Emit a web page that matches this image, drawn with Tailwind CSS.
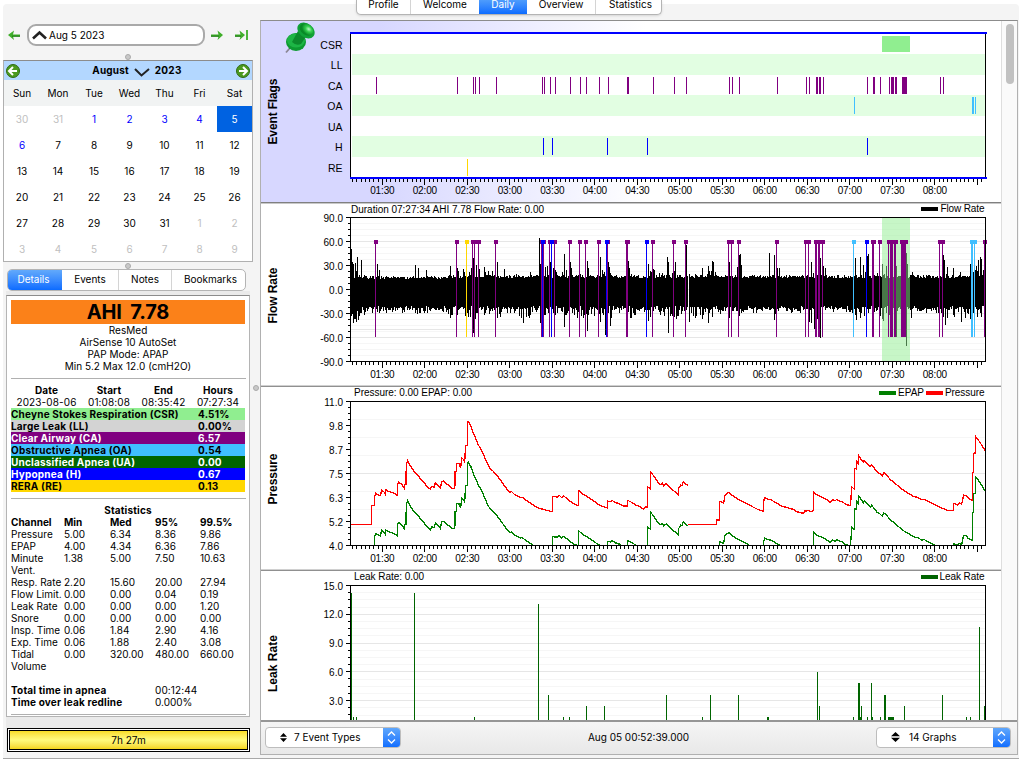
<!DOCTYPE html>
<html lang="en">
  <head>
    <meta charset="UTF-8" />
    <meta name="viewport" content="width=device-width, initial-scale=1.0" />
    <title>Daily</title>
    <!-- Tailwind CSS -->
    <script src="https://cdn.jsdelivr.net/npm/@tailwindcss/browser@4"></script>
  </head>
  <body class="bg-white font-['Inter',sans-serif] text-[10px] leading-3 text-black">
    <div class="relative flex h-[759px] w-[1019px] overflow-hidden pt-1 pl-[3px]">
      <div class="flex w-full rounded-tl rounded-tr border-b border-[#a8a8a8] bg-[#f4f4f4]">
        <!-- Left column -->
        <aside class="w-[250px] shrink-0">
          <!-- Date picker -->
          <div class="flex h-[56px] items-center pt-[6px] pl-[5px]">
            <svg class="h-3 w-3" viewBox="0 0 12 12">
              <path d="M6 1.500 0 6l6 5-1-3.500h7v-2H5z" fill="#3fae2a" />
              <path d="M4 7.200h8" stroke="#17750f" />
            </svg>
            <div class="ml-[7px] flex h-[22px] w-[178px] items-center rounded-[9px] border-2 border-[#a9a9a9] bg-white pl-[3px]">
              <svg class="h-[10px] w-[15px]" viewBox="0 0 15 10">
                <path d="M1 8.500 7.500 2.500l6.500 6" fill="none" stroke="#222" stroke-width="2.600" />
              </svg>
              <span class="ml-[2px]">Aug 5 2023</span>
            </div>
            <svg class="ml-[6px] h-3 w-3" viewBox="0 0 12 12">
              <path d="M6.500 1.500 12 6l-5.500 5 1-3.500H0v-2h7.500z" fill="#3fae2a" />
              <path d="M0 7.200h8" stroke="#17750f" />
            </svg>
            <svg class="ml-3 h-3 w-[13px]" viewBox="0 0 13 12">
              <path d="M4.500 1.500 10 6l-5.500 5 1-3.500H0v-2h5.500z" fill="#3fae2a" />
              <path d="M0 7.200h6" stroke="#17750f" />
              <path d="M11 1h2v10h-2z" fill="#4db53a" />
            </svg>
          </div>

          <!-- Calendar -->
          <div class="h-[202px] w-[250px] border border-[#b0b0b0] border-t-[#8c8c8c] bg-white">
            <div class="flex h-[19px] items-center justify-between bg-[#b3d7ff] px-[2px]">
              <svg class="h-[14px] w-[14px]" viewBox="0 0 14 14">
                <circle cx="7" cy="7" r="6.500" fill="#4c9a1f" stroke="#2f6a12" />
                <path d="M7 3 3 7l4 4M3.500 7H11" fill="none" stroke="#fff" stroke-width="2" />
              </svg>
              <div class="flex items-center pr-[22px] pl-10 font-bold">
                <span class="-mt-px tracking-[0.15px]">August</span>
                <svg class="mx-[5px] mt-1 h-[9px] w-[16px]" viewBox="0 0 16 9">
                  <path d="M1 1l6.500 6.500L15 1" fill="none" stroke="#222" stroke-width="2" />
                </svg>
                <span class="-mt-px tracking-[0.3px]">2023</span>
              </div>
              <svg class="h-[14px] w-[14px]" viewBox="0 0 14 14">
                <circle cx="7" cy="7" r="6.500" fill="#4c9a1f" stroke="#2f6a12" />
                <path d="M7 3l4 4-4 4M10.500 7H3" fill="none" stroke="#fff" stroke-width="2" />
              </svg>
            </div>
            <div id="calendar" class="grid grid-cols-[36px_36px_36px_35px_35px_35px_35px] grid-rows-[26px_26px_26px_26px_26px_26px_25px] text-center leading-[27px]"></div>
          </div>

          <!-- Detail tabs -->
          <div class="relative mt-[7px] ml-1 flex h-[22px] w-[239px] overflow-hidden rounded-[5px] border border-[#b4b4b4] bg-white leading-[19px]">
            <div class="w-[54px] bg-linear-to-b from-[#62a9fb] to-[#0a6bff] pr-[3px] text-center text-white">Details</div>
            <div class="w-[57px] border-r border-[#d4d4d4] text-center">Events</div>
            <div class="w-[53px] border-r border-[#d4d4d4] text-center">Notes</div>
            <div class="grow pl-1 text-center">Bookmarks</div>
          </div>

          <div class="ml-[3px] h-[461px] w-[244px] bg-[#eaeaea] pt-1">
            <div class="h-[422px] border border-[#b4b4b4] border-t-[#8c8c8c] bg-white px-1 pt-1">
              <h1 class="h-6 w-[234px] bg-[#fb8119] text-center text-[20px] leading-6 font-bold tracking-[-0.2px] [word-spacing:4px]">AHI 7.78</h1>
              <div class="w-[234px] text-center tracking-[0.05px]">
                <p>ResMed</p>
                <p>AirSense 10 AutoSet</p>
                <p>PAP Mode: APAP</p>
                <p>Min 5.2 Max 12.0 (cmH2O)</p>
              </div>
              <hr class="mt-[6px] w-[235px] border-[#b0b0b0]" />
              <div class="mt-[5px] grid grid-cols-[71px_54px_55px_54px] text-center tracking-[0.12px]">
                <b>Date</b><b>Start</b><b>End</b><b>Hours</b>
                <span>2023-08-06</span><span>01:08:08</span><span>08:35:42</span><span>07:27:34</span>
              </div>
              <div id="events" class="w-[234px] font-bold tracking-[0.2px]"></div>
              <hr class="mt-[6px] w-[235px] border-[#b0b0b0]" />
              <p class="mt-[5px] w-[234px] text-center font-bold tracking-[0.15px]">Statistics</p>
              <div id="stats" class="grid grid-cols-[53px_46px_45px_45px_45px] [&>*]:whitespace-pre"></div>
              <div class="mt-3 grid grid-cols-[144px_90px] whitespace-nowrap">
                <b class="tracking-[0.18px]">Total time in apnea</b><span class="tracking-[0.1px]">00:12:44</span>
                <b class="tracking-[0.18px]">Time over leak redline</b><span>0.000%</span>
              </div>
              <hr class="mt-[6px] w-[235px] border-[#b0b0b0]" />
            </div>
            <div class="mt-[11px] ml-px h-6 w-[243px] border border-black bg-white p-px">
              <div class="h-5 border border-black bg-linear-to-b from-[#f8dc20] via-[#fffb7c] to-[#f3d513] text-center leading-[18px]">7h 27m</div>
            </div>
          </div>
        </aside>

        <!-- Right column -->
        <main class="ml-[7px] w-[759px]">
          <div class="flex h-4 pl-[96px]">
            <div class="-mt-1 flex h-[15px] w-[306px] overflow-hidden rounded-b-[5px] border border-t-0 border-[#b4b4b4] bg-white text-center leading-[9px] shadow-sm">
              <div class="w-[54px] border-r border-[#d4d4d4]">Profile</div>
              <div class="w-[68px]">Welcome</div>
              <div class="w-[48px] bg-linear-to-b from-[#4e9cfc] to-[#0a6bff] text-white">Daily</div>
              <div class="w-[69px] border-r border-[#d4d4d4]">Overview</div>
              <div class="grow pl-1">Statistics</div>
            </div>
          </div>
          <div class="h-[735px] w-[758px] border border-[#b0b0b0] border-t-[#8c8c8c]">
            <div class="flex h-[699px] bg-white">
              <div id="charts" class="w-[740px] font-['Liberation_Sans',sans-serif] [&>svg]:block"></div>
              <div class="w-4 border-l border-[#dedede] bg-[#fafafa] pt-[3px] pl-1">
                <div class="h-[60px] w-2 rounded-full bg-[#c1c1c1]"></div>
              </div>
            </div>
            <!-- Toolbar -->
            <div class="flex h-[34px] items-center justify-between border-t-2 border-[#969696] bg-linear-to-b from-[#f5f5f5] to-[#e8e8e8] pr-[6px] pb-[2px] pl-1">
              <div class="flex h-[21px] w-[136px] items-center overflow-hidden rounded-[4px] border border-[#bdbdbd] bg-white">
                <svg class="ml-[14px] h-[9px] w-[7px]" viewBox="0 0 7 9"><path d="M3.500 0 7 3.800H0zM3.500 9 7 5.200H0z" /></svg>
                <span class="ml-[7px] grow">7 Event Types</span>
                <svg class="h-[21px] w-[17px] bg-linear-to-b from-[#62a9fb] to-[#0a6bff]" viewBox="0 0 17 21">
                  <path d="M5 8.500 8.500 5 12 8.500M5 12.500l3.500 3.500 3.500-3.500" fill="none" stroke="#fff" stroke-width="1.300" />
                </svg>
              </div>
              <span class="whitespace-nowrap">Aug 05 00:52:39.000</span>
              <div class="flex h-[21px] w-[135px] items-center overflow-hidden rounded-[4px] border border-[#bdbdbd] bg-white">
                <svg class="ml-[14px] h-[10px] w-[9px]" viewBox="0 0 9 10"><path d="M4.500 0 9 4.200H0zM4.500 10 9 5.800H0z" /></svg>
                <span class="ml-[9px] grow">14 Graphs</span>
                <svg class="h-[21px] w-[17px] bg-linear-to-b from-[#62a9fb] to-[#0a6bff]" viewBox="0 0 17 21">
                  <path d="M5 8.500 8.500 5 12 8.500M5 12.500l3.500 3.500 3.500-3.500" fill="none" stroke="#fff" stroke-width="1.300" />
                </svg>
              </div>
            </div>
          </div>
        </main>
      </div>

      <!-- Splitter handles -->
      <i class="absolute top-[54px] left-[125px] h-[6px] w-[6px] rounded-full border border-[#aaa] bg-[#c8c8c8]"></i>
      <i class="absolute top-[263px] left-[125px] h-[6px] w-[6px] rounded-full border border-[#aaa] bg-[#c8c8c8]"></i>
      <i class="absolute top-[385px] left-[253px] h-[6px] w-[6px] rounded-full border border-[#aaa] bg-[#c8c8c8]"></i>
    </div>

    <script>
      // Calendar
      const names = ['Sun', 'Mon', 'Tue', 'Wed', 'Thu', 'Fri', 'Sat'];
      let cal = names.map((n) => `<div class="bg-[#f1f3f3]">${n}</div>`).join('');
      for (let i = 0; i < 42; i++) {
        const d = i - 1;
        const day = d < 1 ? 31 + d : d > 31 ? d - 31 : d;
        let cls = 'text-black';
        if (d < 1 || d > 31) cls = 'text-[#c0c0c0]';
        else if (d === 5) cls = 'bg-[#0062e1] text-white';
        else if (d < 7) cls = 'text-[#0000ff]';
        cal += `<div class="${cls}">${day}</div>`;
      }
      document.getElementById('calendar').innerHTML = cal;

      // Event summary
      const events = [
        ['Cheyne Stokes Respiration (CSR)', '4.51%', 'bg-[#90ee90]'],
        ['Large Leak (LL)', '0.00%', 'bg-[#d3d3d3]'],
        ['Clear Airway (CA)', '6.57', 'bg-[#800080] text-white'],
        ['Obstructive Apnea (OA)', '0.54', 'bg-[#40bfff]'],
        ['Unclassified Apnea (UA)', '0.00', 'bg-[#006400] text-white'],
        ['Hypopnea (H)', '0.67', 'bg-[#0000ff] text-white'],
        ['RERA (RE)', '0.13', 'bg-[#ffd700]'],
      ];
      document.getElementById('events').innerHTML = events
        .map(([n, v, c]) => `<div class="flex h-3 ${c}"><span class="w-[187px]">${n}</span><span>${v}</span></div>`)
        .join('');

      // Statistics
      const stats = [
        ['Pressure', '5.00', '6.34', '8.36', '9.86'],
        ['EPAP', '4.00', '4.34', '6.36', '7.86'],
        ['Minute\nVent.', '1.38', '5.00', '7.50', '10.63'],
        ['Resp. Rate', '2.20', '15.60', '20.00', '27.94'],
        ['Flow Limit.', '0.00', '0.00', '0.04', '0.19'],
        ['Leak Rate', '0.00', '0.00', '0.00', '1.20'],
        ['Snore', '0.00', '0.00', '0.00', '0.00'],
        ['Insp. Time', '0.06', '1.84', '2.90', '4.16'],
        ['Exp. Time', '0.06', '1.88', '2.40', '3.08'],
        ['Tidal\nVolume', '0.00', '320.00', '480.00', '660.00'],
      ];
      document.getElementById('stats').innerHTML =
        ['Channel', 'Min', 'Med', '95%', '99.5%'].map((h) => `<b>${h}</b>`).join('') +
        stats.flat().map((s) => `<span>${s}</span>`).join('');

      // Charts
      const rect = (x, y, w, h, c) => `<rect x="${x}" y="${y}" width="${w}" height="${h}" fill="${c}"/>`;
      const text = (x, y, s, anchor = 'start', len = 0) =>
        `<text x="${x}" y="${y}" text-anchor="${anchor}"${len ? ` textLength="${len}"` : ''}>${s}</text>`;
      const heading = (y, s, len) =>
        `<text transform="translate(277 ${y}) rotate(-90)" text-anchor="middle" font-size="12" font-weight="bold" textLength="${len}">${s}</text>`;

      function timeAxis(y, labelY = y + 15) {
        let out = '';
        for (let k = -7; k <= 141; k++) {
          out += rect(Math.floor(382.4 + k * 4.25), y, 1, k % 10 ? 3 : 6, '#000');
        }
        for (let i = 0; i < 14; i++) {
          const m = 90 + i * 30;
          const label = `0${Math.floor(m / 60)}:${m % 60 ? '30' : '00'}`;
          out += text(382.4 + i * 42.5, labelY, label, 'middle', 24.5);
        }
        return out;
      }

      function grid(y0, step, count, limit, every) {
        let out = '';
        for (let i = 1; i < count; i++) {
          const y = Math.round(y0 + i * step);
          if (y < limit) out += rect(351, y, 634, 1, i % every ? '#f6f6f6' : '#e6e6e6');
        }
        return out;
      }

      function valueAxis(y0, step, labels) {
        let out = '';
        labels.forEach((s, i) => {
          const y = y0 + i * step;
          out += rect(346, Math.round(y), 5, 1, '#000') + text(343, y + 4.5, s, 'end');
          if (i < labels.length - 1 || step > 28) {
            for (let j = 1; j < 4; j++) {
              const my = Math.round(y + (j * step) / 4);
              if (my < 720) out += rect(348, my, 3, 1, '#000');
            }
          }
        });
        return out;
      }

      const frame = (y, h) =>
        rect(350, y, 636, 1, '#000') + rect(350, y, 1, h, '#000') + rect(985, y, 1, h, '#000');
      const chart = (y, h, body) =>
        `<svg width="740" height="${h}" viewBox="261 ${y} 740 ${h}" font-size="10" shape-rendering="crispEdges">${body}</svg>`;

      const CA = [[376,1],[457,1],[473,1],[475,1],[479,1],[496,1],[542,1],[544,1],[550,1],[555,1],[570,1],[580,1],[586,1],[599,1],[608,1],[627,2],
        [653,1],[674,1],[686,1],[729,1],[732,1],[739,1],[777,1],[806,1],[809,1],[816,2],[819,2],[823,1],[867,1],[873,2],[880,1],[889,1],[891,3],[895,2],[902,5],[940,1],[943,1]];
      const OA = [[854,1],[972,2],[975,1]];
      const H = [[543,1],[552,1],[607,1],[647,1],[867,1]];
      const RE = [[467,1]];

      // Event flags
      let flags = `<defs>
        <linearGradient id="lav"><stop offset=".16" stop-color="#d7d7ff"/><stop offset=".52" stop-color="#fff"/></linearGradient>
        <radialGradient id="pin" cx=".6" cy=".35"><stop offset="0" stop-color="#b9f7c2"/><stop offset=".45" stop-color="#34cf4f"/><stop offset="1" stop-color="#088a26"/></radialGradient>
      </defs><rect x="261" y="21" width="740" height="181" fill="url(#lav)"/>`;
      flags += rect(351, 33, 634, 145, '#fff');
      [54, 95, 136].forEach((y) => (flags += rect(352, y, 633, 21, '#e2fee2')));
      flags += rect(882, 36, 28, 16, '#90ee90');
      CA.forEach(([x, w]) => (flags += rect(x, 77, w, 17, '#800080')));
      OA.forEach(([x, w]) => (flags += rect(x, 97, w, 17, '#40bfff')));
      H.forEach(([x, w]) => (flags += rect(x, 138, w, 17, '#0000ff')));
      RE.forEach(([x, w]) => (flags += rect(x, 159, w, 17, '#ffd700')));
      flags += rect(350, 33, 1, 145, '#000') + rect(985, 33, 1, 145, '#000');
      flags += rect(350, 32, 637, 2, '#00f') + rect(350, 177, 637, 2, '#00f') + timeAxis(179, 193.5);
      ['CSR', 'LL', 'CA', 'OA', 'UA', 'H', 'RE'].forEach((s, i) => {
        flags += `<text x="342.5" y="${49 + i * 20.45}" font-size="10.5" text-anchor="end">${s}</text>`;
      });
      flags += heading(111.5, 'Event Flags', 66);
      flags += `<g shape-rendering="auto">
        <path d="M286 52.500l7-8" stroke="#8b8794" stroke-width="1.800"/>
        <ellipse cx="296" cy="42" rx="10" ry="9" fill="#0d9a31"/>
        <ellipse cx="296" cy="40.500" rx="9" ry="7" fill="#1db545"/>
        <path d="M292 42l6-11 9 4-6 9q-5 2-9-2z" fill="#0c8a2c"/>
        <ellipse cx="306" cy="30.500" rx="9.500" ry="7" transform="rotate(38 306 30.500)" fill="#10a237"/>
        <ellipse cx="306.500" cy="29.500" rx="7.500" ry="5.500" transform="rotate(38 306.500 29.500)" fill="url(#pin)"/>
      </g>`;
      flags += rect(261, 202, 740, 1, '#808080') + rect(261, 203, 740, 1, '#c8c8c8');

      // Flow rate
      let seed = 7;
      const rnd = () => (seed = (seed * 16807) % 2147483647) / 2147483647;
      const up = { 351: 249, 352: 262, 353: 264, 355: 263, 357: 257, 361: 260, 377: 264, 379: 270, 415: 265, 418: 268, 426: 270, 450: 266, 457: 268, 463: 269, 471: 268, 473: 258, 474: 260, 476: 265, 479: 269, 484: 267,
        497: 262, 504: 269, 539: 238, 540: 264, 545: 267, 547: 266, 550: 262, 553: 268, 555: 270, 564: 254, 569: 265, 570: 262, 571: 268, 587: 261, 588: 268, 600: 257, 606: 257, 608: 262, 609: 267, 628: 261, 629: 268,
        648: 264, 653: 269, 667: 257, 668: 262, 675: 262, 686: 245, 702: 268, 708: 266, 712: 261, 713: 262, 729: 262, 737: 267, 739: 255, 740: 254, 741: 265, 769: 253, 774: 255, 777: 268, 779: 268, 808: 265, 811: 262, 815: 262, 820: 258, 823: 266, 825: 268,
        855: 258, 860: 257, 863: 265, 867: 256, 868: 254, 882: 264, 886: 266, 890: 265, 896: 266, 906: 253, 907: 264, 943: 255, 944: 260, 947: 267, 953: 268, 970: 264, 971: 263, 976: 266, 978: 260, 980: 257, 981: 259, 984: 265 };
      const down = { 352: 314, 353: 323, 356: 322, 360: 313, 377: 312, 380: 311, 415: 313, 417: 314, 425: 311, 448: 314, 450: 318, 457: 315, 465: 316, 467: 313, 473: 333, 475: 319, 478: 316, 497: 318, 499: 314, 519: 316, 523: 323, 540: 323, 545: 315, 549: 314, 553: 313, 564: 327, 569: 314,
        586: 314, 587: 331, 598: 320, 600: 322, 605: 335, 606: 336, 610: 326, 627: 312, 630: 318, 648: 321, 650: 317, 668: 333, 673: 321, 676: 319, 678: 316, 689: 322, 702: 319, 708: 323, 712: 317, 729: 318, 739: 316, 774: 320, 775: 314, 809: 322, 811: 323, 814: 329, 817: 319, 820: 338,
        856: 320, 860: 318, 864: 316, 882: 319, 883: 321, 896: 337, 906: 346, 936: 313, 943: 317, 945: 325, 947: 318, 954: 317, 961: 322, 968: 314, 970: 319, 977: 317, 980: 313 };
      // Stretches where the breathing swings wider
      const busy = [[351, 366], [448, 500], [515, 530], [540, 612], [627, 635], [648, 720], [808, 824], [855, 912], [936, 985]];
      let flow = grid(217, 6, 24, 361, 4);
      for (let x = 351; x < 985; x++) {
        if (x === 688) continue;
        const calm = x > 366 && x < 448;
        const wide = busy.some(([a, z]) => x >= a && x <= z);
        let t = 278 - rnd() * 3 + (calm ? 1 : 0) - (wide && rnd() > 0.75 ? rnd() * 6 : 0);
        let b = 306 + rnd() * 4 + (rnd() > 0.5 ? rnd() * (wide ? 9 : 4) : 0) + (x < 360 ? 4 : 0);
        t = Math.round(up[x] || t);
        b = Math.round(down[x] || b);
        flow += rect(x, t, 1, b - t, '#000');
      }
      flow += rect(882, 218, 28, 143, 'rgba(144,238,144,.5)');
      flow += rect(351, 329, 634, 1, 'rgba(128,128,128,.2)');
      [[CA.concat([[985, 1]]), '#800080'], [OA, '#40bfff'], [H, '#0000ff'], [RE, '#ffd700']].forEach(([list, c]) => {
        list.forEach(([x, w]) => (flow += rect(x - 1, 243, w, 94, c) + rect(x - 2, 240, w + 3, 4, c)));
      });
      flow += frame(217, 145) + rect(350, 361, 636, 1, '#000') + timeAxis(362, 378);
      flow += valueAxis(217, 24, ['90.0', '60.0', '30.0', '0.0', '-30.0', '-60.0', '-90.0']);
      flow += text(351, 213, 'Duration 07:27:34 AHI 7.78 Flow Rate: 0.00', 'start', 193);
      flow += rect(921, 207, 17, 4, '#000') + text(984.5, 212, 'Flow Rate', 'end', 44);
      flow += heading(295.5, 'Flow Rate', 56);
      flow += rect(261, 385, 740, 1, '#d0d0d0') + rect(261, 386, 740, 1, '#909090');

      // Pressure, traced at a third of a pixel per unit; EPAP runs a fixed offset below
      const left = '286,418 349,418 349,361 358,361 358,337 362,325 367,328 376,332 380,315 388,322 391,328 392,314 400,319 408,322 416,324 427,331 427,300 431,292 440,298 448,310 448,298 453,298 453,267 455,235 458,226 463,238 472,252 482,265 490,272 497,282 505,290 515,303 526,313 530,304 538,307 541,293 548,299 556,309 560,290 567,288 574,296 583,302 590,310 598,310 600,300 600,260 605,258 605,235 612,236 617,248 620,218 624,222 629,230 632,182 637,180 637,112 640,110 648,125 655,145 663,162 670,180 678,192 688,215 698,238 706,252 714,258 724,269 734,282 744,296 754,310 764,322 770,320 780,330 796,338 802,337 812,345 826,354 836,361 848,368 864,373 880,377 892,380 892,334 908,336 912,330 920,338 926,333 934,339 945,349 958,357 968,361 971,361 971,317 985,328 1000,337 1016,348 1030,358 1045,365 1057,369 1057,348 1068,350 1071,346 1080,352 1092,356 1104,363 1118,363 1118,346 1130,352 1142,359';
      const mid = '1140,359 1152,364 1166,372 1170,366 1177,366 1177,318 1179,306 1186,312 1186,260 1195,271 1205,286 1215,299 1222,295 1226,302 1234,296 1244,305 1252,315 1262,321 1270,329 1271,310 1277,300 1281,302 1285,290 1290,296 1298,301';
      const right = '158,418 244,418 244,405 254,405 254,349 266,354 270,330 276,326 281,322 292,331 306,341 320,348 336,356 352,365 368,373 386,379 386,350 389,338 402,344 408,344 420,352 440,363 456,368 474,373 488,381 506,385 510,378 520,377 532,380 535,376 535,320 545,329 558,335 574,343 586,352 592,344 600,348 605,343 614,348 622,350 632,358 646,362 648,340 650,306 658,312 658,250 664,252 664,228 669,235 671,212 680,225 685,232 688,226 695,234 706,245 710,240 718,250 727,262 735,266 742,273 746,263 752,266 765,283 778,293 792,305 808,318 822,326 835,334 850,338 860,344 868,343 884,352 905,362 925,371 940,377 955,377 956,355 968,360 972,354 980,357 986,330 994,332 1000,340 1012,346 1012,262 1016,262 1016,205 1021,204 1021,154 1030,165 1040,180 1050,196';
      const trace = (c, dy) => `<g fill="none" stroke="${c}" stroke-width="4" transform="translate(255 ${385 + dy}) scale(.33333)">
        <polyline points="${left}"/><polyline points="${mid}"/><polyline transform="translate(1140)" points="${right}"/></g>`;
      let pressure = `<clipPath id="plot"><rect x="351" y="402" width="634" height="143"/></clipPath>`;
      pressure += grid(401, 18, 8, 545, 4);
      pressure += `<g clip-path="url(#plot)">${trace('#008000', 40.3)}${trace('#ff0000', 0)}</g>`;
      pressure += frame(401, 145) + rect(350, 545, 636, 1, '#000') + timeAxis(546, 562);
      pressure += valueAxis(401, 24, ['11.0', '9.8', '8.7', '7.5', '6.3', '5.2', '4.0']);
      pressure += text(354, 396, 'Pressure: 0.00 EPAP: 0.00', 'start', 118);
      pressure += rect(879, 391, 17, 4, '#008000') + text(898, 396, 'EPAP', 'start', 26);
      pressure += rect(926, 391, 17, 4, '#ff0000') + text(984.5, 396, 'Pressure', 'end', 39.5);
      pressure += heading(479, 'Pressure', 51);
      pressure += rect(261, 569, 740, 1, '#d0d0d0') + rect(261, 570, 740, 1, '#909090');

      // Leak rate
      const leaks = [[351,593,1],[353,717,1],[356,717,1],[414,593,1],[474,717,1],[538,604,1],[548,695,1],[563,717,1],[569,717,1],[586,706,1],[604,706,1],
        [666,695,1],[702,717,1],[710,695,1],[738,695,1],[767,717,2],[817,672,1],[819,706,1],[853,717,1],[858,683,2],[860,717,1],[861,706,1],[867,717,1],[871,683,1],[872,717,1],[880,717,1],
        [884,695,2],[888,717,6],[904,706,1],[942,695,1],[966,717,1],[970,717,1],[979,627,1],[984,706,1]];
      let leak = grid(585, 7.2, 19, 720, 4);
      leaks.forEach(([x, y, w]) => (leak += rect(x, y, w, 720 - y, '#006400')));
      leak += frame(585, 135) + valueAxis(585, 28.75, ['15.0', '12.0', '9.0', '6.0', '3.0']);
      leak += text(354, 580, 'Leak Rate: 0.00', 'start', 70);
      leak += rect(921, 575, 17, 4, '#006400') + text(984.5, 580, 'Leak Rate', 'end', 45);
      leak += heading(663.5, 'Leak Rate', 57);

      document.getElementById('charts').innerHTML =
        chart(21, 183, flags) + chart(204, 183, flow) + chart(387, 184, pressure) + chart(571, 149, leak);
    </script>
  </body>
</html>
